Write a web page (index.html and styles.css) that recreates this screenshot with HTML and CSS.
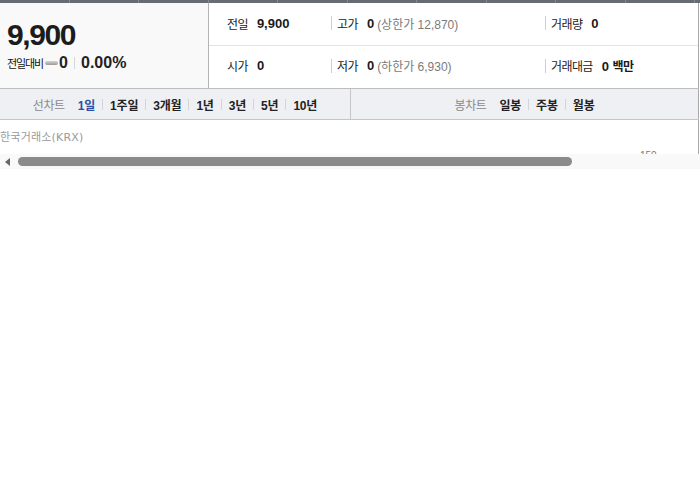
FILE: index.html
```html
<!DOCTYPE html>
<html lang="ko">
<head>
<meta charset="utf-8">
<link rel="stylesheet" href="styles.css">
</head>
<body>
<div class="wrap">
  <div class="topbar">
    <span class="tb"></span><span class="tb"></span><span class="tb"></span><span class="tb"></span><span class="tb"></span><span class="tb"></span><span class="tb"></span><span class="tb"></span><span class="tb"></span><span class="tb"></span>
  </div>
  <div class="summary">
    <div class="price-box">
      <div class="price">9,900</div>
      <div class="change">
        <span class="chg-label">전일대비</span>
        <span class="flat-icon"></span>
        <span class="chg-val">0</span>
        <span class="vsep"></span>
        <span class="chg-rate">0.00%</span>
      </div>
    </div>
    <div class="stats">
      <div class="row">
        <div class="cell c1"><span class="lbl">전일</span><span class="val">9,900</span></div>
        <div class="cell c2"><span class="lbl">고가</span><span class="val">0</span><span class="sub">(상한가 12,870)</span></div>
        <div class="cell c3"><span class="lbl">거래량</span><span class="val">0</span></div>
      </div>
      <div class="row">
        <div class="cell c1"><span class="lbl">시가</span><span class="val">0</span></div>
        <div class="cell c2"><span class="lbl">저가</span><span class="val">0</span><span class="sub">(하한가 6,930)</span></div>
        <div class="cell c3"><span class="lbl">거래대금</span><span class="val">0 <span class="unit">백만</span></span></div>
      </div>
    </div>
  </div>
  <div class="tabbar">
    <div class="tabgroup left">
      <span class="tg-title">선차트</span>
      <span class="tab active">1일</span><span class="tsep"></span>
      <span class="tab">1주일</span><span class="tsep"></span>
      <span class="tab">3개월</span><span class="tsep"></span>
      <span class="tab">1년</span><span class="tsep"></span>
      <span class="tab">3년</span><span class="tsep"></span>
      <span class="tab">5년</span><span class="tsep"></span>
      <span class="tab">10년</span>
    </div>
    <div class="tabgroup right">
      <span class="tg-title">봉차트</span>
      <span class="tab">일봉</span><span class="tsep"></span>
      <span class="tab">주봉</span><span class="tsep"></span>
      <span class="tab">월봉</span>
    </div>
  </div>
  <div class="chart">
    <div class="source">한국거래소(KRX)</div>
    <span class="axis-label">150</span>
    <div class="scrollbar">
      <svg class="arrow" width="6" height="8" viewBox="0 0 6 8"><path d="M5 0 L5 8 L0 4 Z" fill="#666"/></svg>
      <div class="thumb"></div>
    </div>
  </div>
</div>
</body>
</html>
```

FILE: styles.css
```css
* { box-sizing: border-box; }
body {
  margin: 0;
  background: #fff;
  font-family: "Liberation Sans", "Noto Sans CJK KR", sans-serif;
  color: #222;
}
.wrap { width: 700px; }

.topbar {
  height: 3px;
  background: #666b74;
  display: flex;
}
.tb {
  width: 69.5px;
  border-right: 1px solid #868b93;
}

.summary {
  display: flex;
  height: 85px;
}
.price-box {
  width: 209px;
  background: #f9f9f9;
  border-right: 1px solid #b4b4b4;
  padding: 15px 0 0 7px;
}
.price {
  font-size: 30px;
  font-weight: bold;
  letter-spacing: -1.4px;
  line-height: 34px;
  color: #1c1c1c;
}
.change {
  display: flex;
  align-items: center;
  height: 22px;
  margin-top: 0;
}
.chg-label {
  font-size: 11px;
  letter-spacing: -1.1px;
  color: #111;
}
.flat-icon {
  width: 13px;
  height: 4px;
  margin: 0 1px 0 2px;
  border-radius: 2px;
  background: linear-gradient(#d4d4d4, #9a9a9a);
}
.chg-val, .chg-rate {
  font-size: 16px;
  font-weight: bold;
  color: #222;
}
.vsep {
  width: 1px;
  height: 12px;
  background: #d6d6d6;
  margin: 0 6px;
}

.stats {
  flex: 1;
  display: flex;
  flex-direction: column;
  border-right: 1px solid #a8a8a8;
  margin-right: 1px;
}
.row {
  flex: 1;
  display: flex;
  align-items: center;
}
.row:first-child { padding-bottom: 1px; }
.row + .row { border-top: 1px solid #e3e3e3; padding-bottom: 2px; }
.cell {
  display: flex;
  align-items: center;
  height: 14px;
}
.c1 { width: 122px; padding-left: 18px; }
.c2 { width: 214px; border-left: 1px solid #cfcfcf; padding-left: 5px; }
.c3 { flex: 1; border-left: 1px solid #cfcfcf; padding-left: 5px; }
.lbl {
  font-size: 12px;
  letter-spacing: -0.6px;
  color: #222;
  margin-right: 9px;
}
.val {
  font-size: 13px;
  font-weight: bold;
  color: #1a1a1a;
}
.unit { font-size: 12px; letter-spacing: -0.6px; }
.sub {
  font-size: 12px;
  color: #7a7a7a;
  letter-spacing: 0;
  margin-left: 3px;
}

.tabbar {
  display: flex;
  height: 32px;
  background: #eef0f4;
  border-top: 1px solid #bdbdbd;
  border-bottom: 1px solid #c6c6c6;
  width: 699px;
}
.tabgroup {
  display: flex;
  align-items: center;
  justify-content: center;
}
.tabgroup.left { width: 351px; border-right: 1px solid #c6c6c6; }
.tabgroup.right { flex: 1; border-right: 1px solid #a8a8a8; }
.tg-title {
  font-size: 12px;
  color: #8a8a8a;
  letter-spacing: -0.4px;
  margin-right: 13px;
}
.tab {
  font-size: 12px;
  font-weight: bold;
  color: #222;
  letter-spacing: -0.2px;
}
.tab.active { color: #2c4ea6; }
.tsep {
  width: 1px;
  height: 11px;
  background: #d2d4d8;
  margin: 0 7px;
}

.chart {
  position: relative;
  height: 50px;
  width: 700px;
}
.chart::after {
  content: "";
  position: absolute;
  right: 1px;
  top: 0;
  height: 34px;
  width: 1px;
  background: #a8a8a8;
}
.source {
  padding-top: 11px;
  height: 34px;
  font-size: 11px;
  color: #9a9a9a;
  letter-spacing: 0.2px;
  line-height: 14px;
  font-family: "DejaVu Sans", "Noto Sans CJK KR", sans-serif;
}
.axis-label {
  position: absolute;
  left: 640px;
  top: 31px;
  font-size: 10px;
  color: #777;
  line-height: 10px;
}
.scrollbar {
  position: relative;
  z-index: 1;
  height: 15px;
  background: #f9f9f9;
  display: flex;
  align-items: center;
  padding-left: 5px;
}
.arrow { margin-right: 7px; }
.thumb {
  width: 554px;
  height: 9px;
  border-radius: 5px;
  background: #8b8b8b;
}
```
